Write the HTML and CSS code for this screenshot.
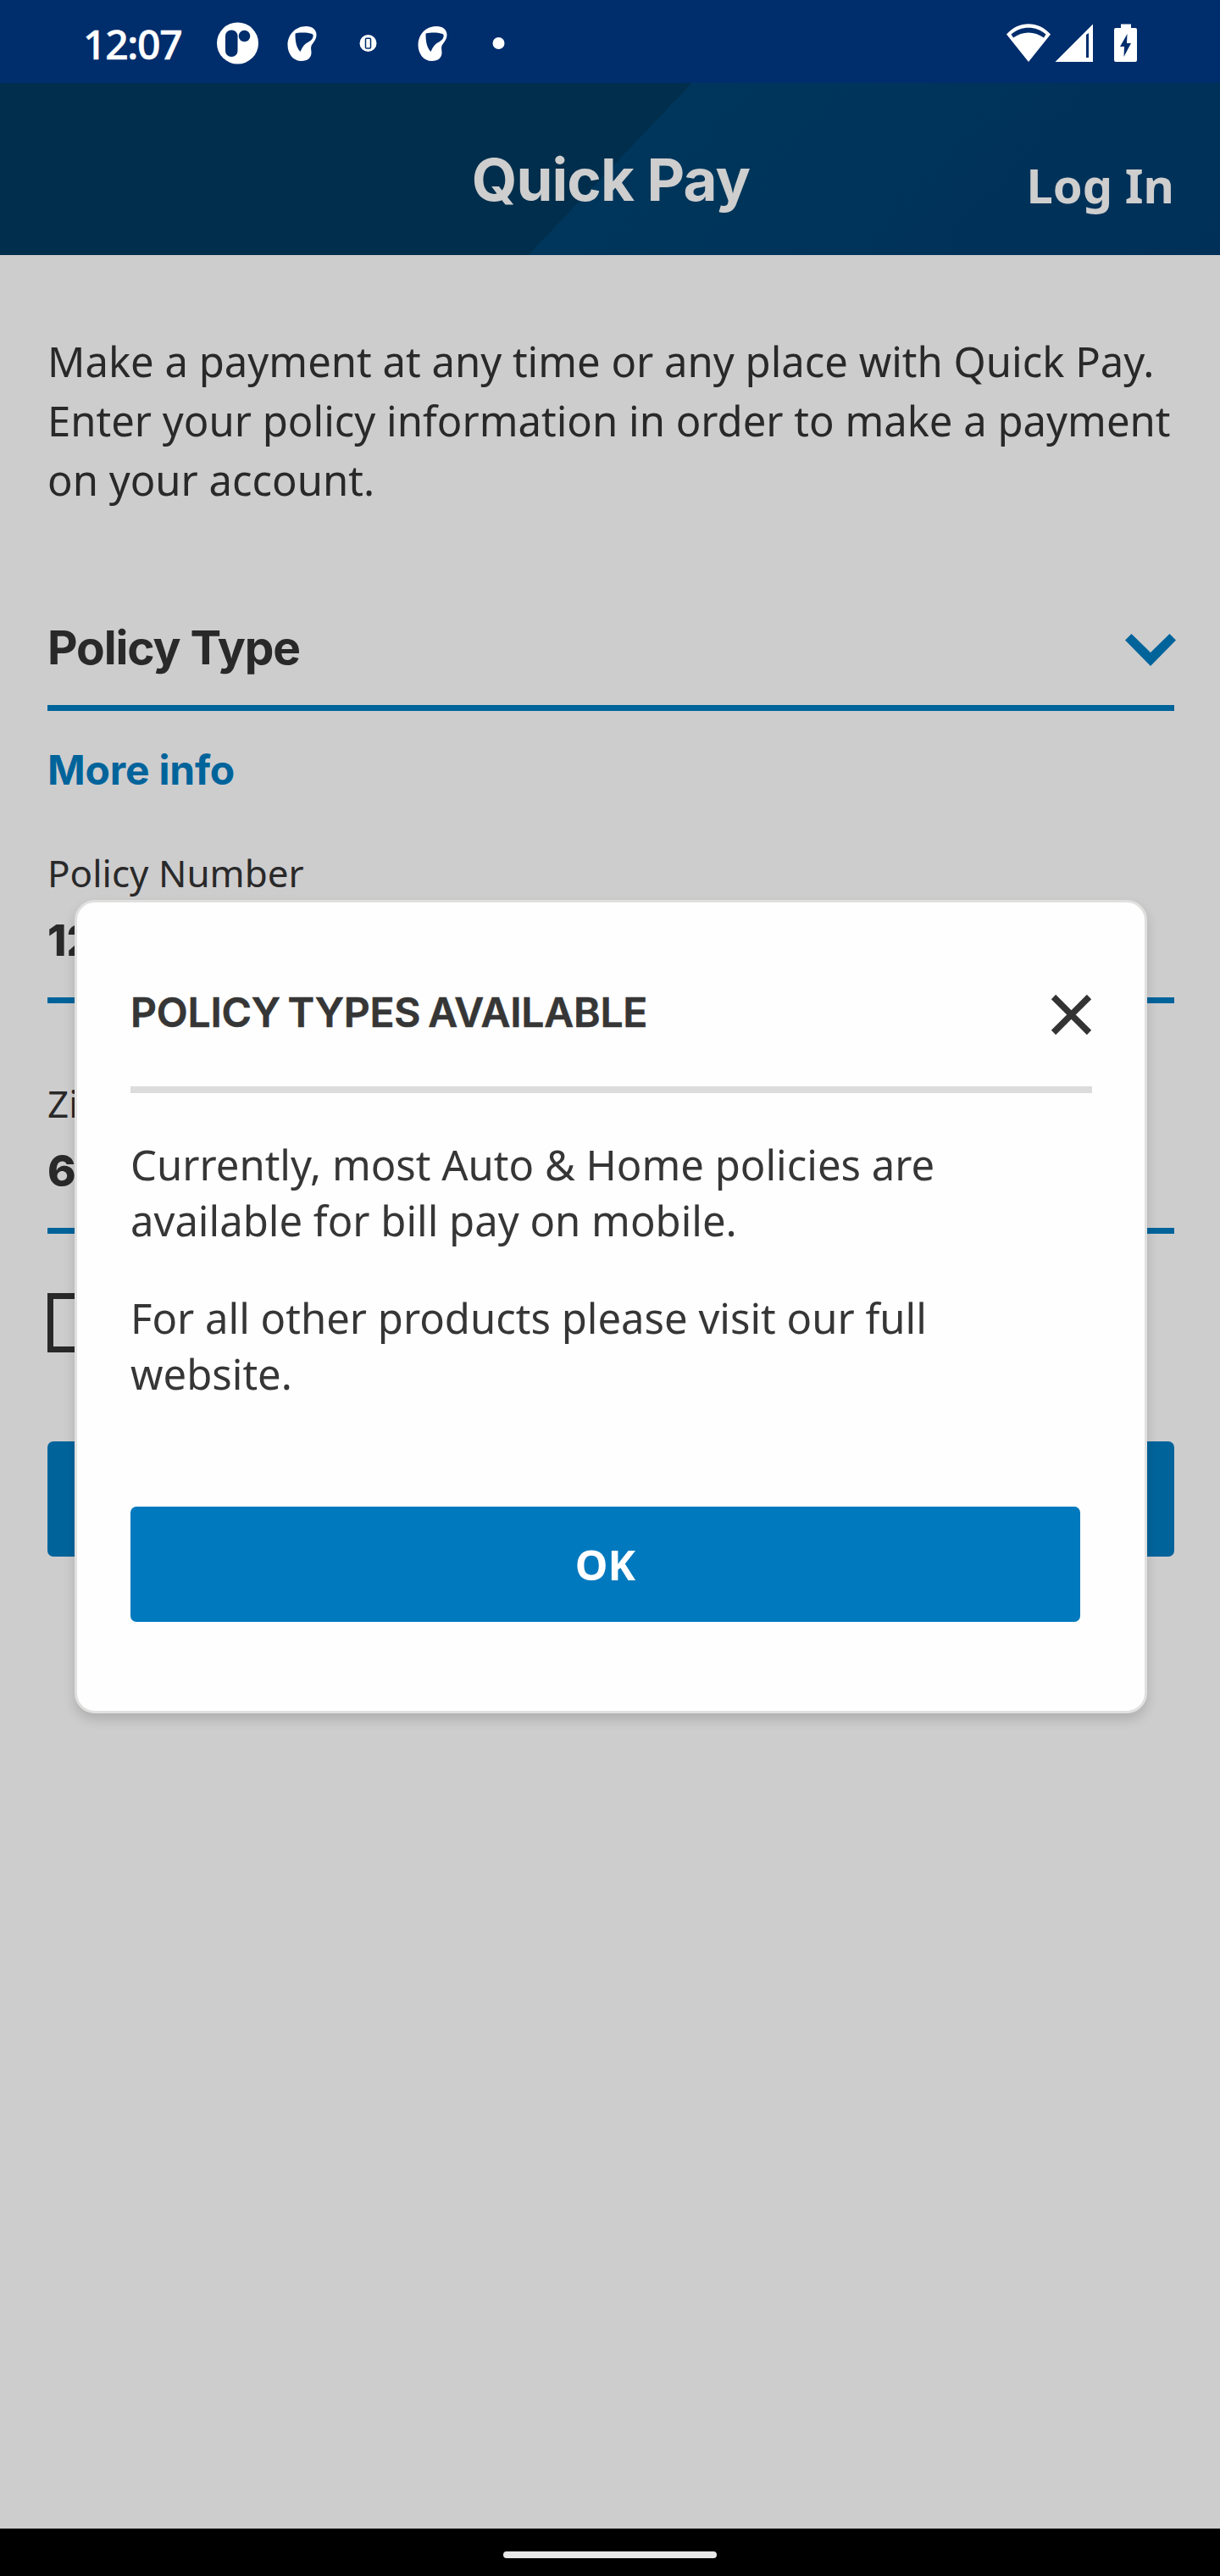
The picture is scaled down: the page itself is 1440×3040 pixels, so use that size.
FILE: index.html
```html
<!DOCTYPE html>
<html lang="en">
<head>
<meta charset="utf-8">
<title>Quick Pay</title>
<link rel="stylesheet" href="styles.css">
</head>
<body>
<div class="screen">
  <div class="status">
    <span class="time">12:07</span>
    <div class="notifications">
      <svg viewBox="-38.5 -25 77 50"><circle r="24.5" fill="#fff"/><rect x="-14.5" y="-15.5" width="14.5" height="31.5" rx="7" fill="#002d6c"/><circle cx="8" cy="-8.5" r="6.8" fill="#002d6c"/></svg>
      <svg viewBox="-38.5 -25 77 50"><path class="mark" d="M4-20C-10-20-18-9-18 2C-18 13-11 21-2 21C6 21 10 17 10 11C10 8 9 6 10 3C12-1 16-4 16-10C16-16 11-20 4-20ZM-9-11C-8-13 9-13 12-10C13-5 8-2 4 0C0 3-1 6-3 10C-8 5-9-3-9-11Z"/></svg>
      <svg viewBox="-38.5 -25 77 50"><circle r="10" fill="#fff"/><rect x="-3" y="-5.7" width="6" height="11.6" rx="1" fill="none" stroke="#002d6c" stroke-width="1.5"/></svg>
      <svg viewBox="-38.5 -25 77 50"><path class="mark" d="M4-20C-10-20-18-9-18 2C-18 13-11 21-2 21C6 21 10 17 10 11C10 8 9 6 10 3C12-1 16-4 16-10C16-16 11-20 4-20ZM-9-11C-8-13 9-13 12-10C13-5 8-2 4 0C0 3-1 6-3 10C-8 5-9-3-9-11Z"/></svg>
      <svg viewBox="-38.5 -25 77 50"><circle r="7" fill="#fff"/></svg>
    </div>
    <svg class="system" viewBox="0 0 154 46" fill="#fff" fill-rule="evenodd">
      <path d="M0 12.500C14-4 38-4 52 12.500L26 45ZM5.500 12.500L8 16.500C19 8.500 33 8.500 44 16.500L46.500 12.500C35 2 17 2 5.500 12.500Z"/>
      <path d="M57.500 45L102 .5V45ZM94 13V40H97V11Z"/>
      <path d="M135 .5H147V5H152Q154 5 154 7V43Q154 45 152 45H129Q127 45 127 43V7Q127 5 129 5H135ZM142.500 12L134 27H139L138.500 39L147 23H142Z"/>
    </svg>
  </div>

  <header class="header">
    <h1 class="title">Quick Pay</h1>
    <a class="login">Log In</a>
  </header>

  <main class="content">
    <p class="intro">Make a payment at any time or any place with Quick Pay. Enter your policy information in order to make a payment on your account.</p>
    <div class="select">
      <span>Policy Type</span>
      <svg class="chevron" viewBox="0 0 60 38"><path d="M7.500 0L30 22L52.500 0L60 7.500L30 38L0 7.500Z" fill="#00649b"/></svg>
    </div>
    <a class="more">More info</a>
    <div class="field"><label class="label">Policy Number</label><div class="value">12</div></div>
    <div class="field field-next"><label class="label">Zip</label><div class="value">6</div></div>
    <div class="checkbox"></div>
    <div class="submit"></div>
  </main>

  <div class="navbar"><div class="handle"></div></div>

  <section class="dialog">
    <div class="dialog-head">
      <h2 class="dialog-title">POLICY TYPES AVAILABLE</h2>
      <svg class="close" viewBox="0 0 49 49"><path d="M3.500 3.500L45.500 45.500M45.500 3.500L3.500 45.500" stroke="#333" stroke-width="7.500"/></svg>
    </div>
    <p class="dialog-text">Currently, most Auto &amp; Home policies are available for bill pay on mobile.</p>
    <p class="dialog-text dialog-text-next">For all other products please visit our full website.</p>
    <button class="ok">OK</button>
  </section>
</div>
</body>
</html>
```
FILE: styles.css
```css
* { box-sizing: border-box; }
body { margin: 0; }
h1, h2, p { margin: 0; }

.screen {
  position: relative;
  display: flex;
  flex-direction: column;
  width: 1440px;
  height: 3040px;
  overflow: hidden;
  background: #cecdce;
  color: #292929;
  font-family: "Noto Sans", sans-serif;
}

.status {
  display: flex;
  align-items: center;
  height: 98px;
  padding: 4px 98px 0;
  background: #002d6c;
  color: #fff;
}
.time { width: 144px; padding-top: 1px; font-size: 48px; font-weight: 500; line-height: 94px; letter-spacing: -1.3px; -webkit-text-stroke: 0.6px #fff; }
.notifications { display: flex; }
.notifications svg { width: 77px; height: 50px; }
.mark { fill: #fff; fill-rule: evenodd; }
.system { width: 154px; height: 46px; margin-left: auto; }

.header {
  display: grid;
  grid-template-columns: 1fr auto 1fr;
  align-items: start;
  height: 203px;
  padding: 70px 54px 0 56px;
  background: linear-gradient(133.55deg, #002e4c 50%, #00365b 50%, #003058);
  color: #cecece;
}
.title { grid-column: 2; margin-top: 2px; font: 700 69px/84px Inter, sans-serif; letter-spacing: -0.9px; }
.login { justify-self: end; margin-top: 12px; font-size: 56px; font-weight: 700; line-height: 76px; }

.content { flex: 1; padding: 90px 54px 0 56px; }
.intro { margin-right: -20px; font-size: 49px; line-height: 70px; }
.select {
  display: flex;
  justify-content: space-between;
  align-items: flex-start;
  height: 109px;
  margin-top: 129px;
  border-bottom: 7px solid #00649b;
  font: 700 55px/66px Inter, sans-serif;
  letter-spacing: -1.1px;
}
.select span { margin-top: 1px; }
.chevron { width: 60px; height: 38px; margin: 18px -2px 0 0; }
.more { display: block; margin-top: 40px; color: #00649b; font: 700 48px/60px Inter, sans-serif; letter-spacing: -0.2px; }
.field { height: 184px; margin-top: 61px; border-bottom: 7px solid #00649b; }
.field-next { margin-top: 88px; }
.label { display: block; font-size: 44px; line-height: 60px; }
.value { margin-top: 20px; font: 800 51px/60px Inter, sans-serif; }
.checkbox { width: 70px; height: 70px; margin-top: 70px; border: 7px solid #292929; }
.submit { height: 136px; margin-top: 105px; border-radius: 7px; background: #00649b; }

.navbar { display: flex; justify-content: center; height: 56px; padding-top: 27px; background: #000; }
.handle { width: 252px; height: 8px; border-radius: 4px; background: #e8e8e8; }

/* Modal dialog over the dimmed page */
.dialog {
  position: absolute;
  left: 88px;
  top: 1062px;
  width: 1266px;
  height: 960px;
  padding: 100px 62px 0 63px;
  border: 3px solid #e0e0df;
  border-radius: 24px;
  background: #fefefe;
  box-shadow: 0 7px 14px rgba(0, 0, 0, 0.15);
  color: #363636;
}
.dialog-head { display: flex; justify-content: space-between; align-items: flex-start; height: 125px; border-bottom: 8px solid #dcdcdc; }
.dialog-title { font: 600 48px/60px Inter, sans-serif; letter-spacing: -0.2px; word-spacing: -3px; -webkit-text-stroke: 0.6px #363636; }
.close { width: 49px; height: 49px; margin-top: 8px; }
.dialog-text { margin-top: 51px; font-size: 49px; line-height: 66px; }
.dialog-text-next { margin-top: 49px; }
.ok {
  display: block;
  width: 1121px;
  height: 136px;
  margin-top: 124px;
  padding: 0;
  border: 0;
  border-radius: 7px;
  background: #0079be;
  color: #fff;
  font: 700 49px/135px "Noto Sans", sans-serif;
}
```
